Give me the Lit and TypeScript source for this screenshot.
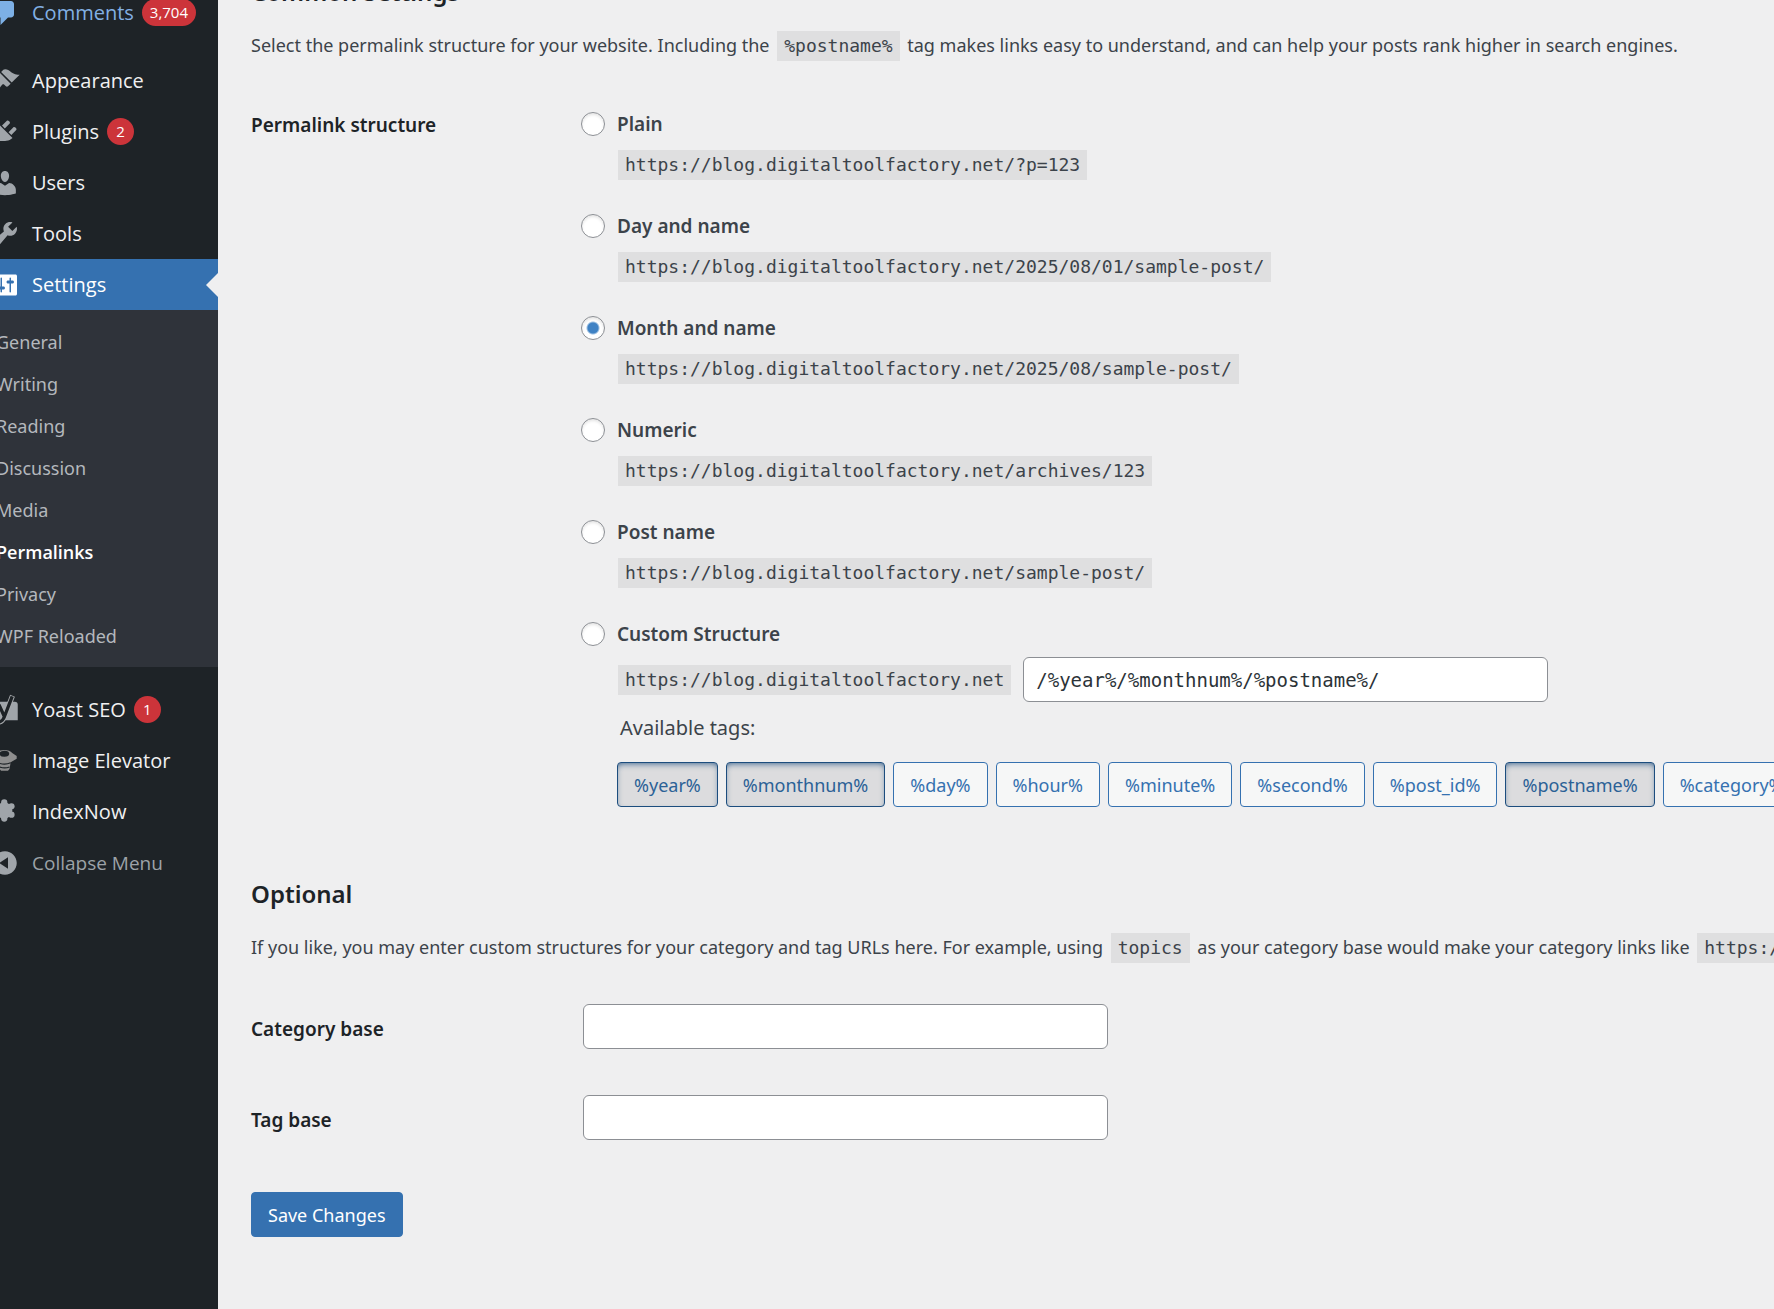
import { LitElement, html, css, svg } from "lit";
import { customElement, state } from "lit/decorators.js";
import { classMap } from "lit/directives/class-map.js";

const site = "https://blog.digitaltoolfactory.net";

const icons = {
  comments: svg`<path d="M5 2h9q.82 0 1.41.59T16 4v7q0 .82-.59 1.41T14 13h-2l-5 5v-5H5q-.82 0-1.41-.59T3 11V4q0-.82.59-1.41T5 2z"/>`,
  appearance: svg`<path d="M14.48 11.06L7.41 3.99l1.5-1.5c.5-.56 2.3-.47 3.51.32 1.21.8 1.43 1.28 2.91 2.1 1.18.64 2.45 1.26 4.45.85zm-.71.71L6.7 4.7 4.93 6.47c-.39.39-.39 1.02 0 1.41l1.06 1.06c.39.39.39 1.03 0 1.42-.6.6-1.43 1.11-2.21 1.69-.35.26-.7.53-1.01.84C1.43 14.23.4 16.08 1.4 17.07c.99 1 2.84-.03 4.18-1.36.31-.31.58-.66.85-1.02.57-.78 1.08-1.61 1.69-2.21.39-.39 1.02-.39 1.41 0l1.06 1.06c.39.39 1.02.39 1.41 0z"/>`,
  plugins: svg`<path d="M13.11 4.36L9.87 7.6 8 5.73l3.24-3.24c.35-.34 1.05-.2 1.56.32.52.51.66 1.21.31 1.55zm-8 1.77l.91-1.12 9.01 9.01-1.19.84c-.71.71-2.63 1.16-3.82 1.16H6.14L4.9 17.26c-.59.59-1.54.59-2.12 0-.59-.58-.59-1.53 0-2.12l1.24-1.24v-3.88c0-1.13.4-3.19 1.09-3.89zm7.26 3.97l3.24-3.24c.34-.35 1.04-.21 1.55.31.52.51.66 1.21.31 1.55l-3.24 3.25z"/>`,
  users: svg`<path d="M10 9.25c-2.27 0-2.73-3.44-2.73-3.44C7 4.02 7.82 2 9.97 2c2.16 0 2.98 2.02 2.71 3.81 0 0-.41 3.44-2.68 3.44zm0 2.57L12.72 10c2.39 0 4.52 2.33 4.52 4.53v2.49s-3.65 1.13-7.24 1.13c-3.65 0-7.24-1.13-7.24-1.13v-2.49c0-2.25 1.94-4.48 4.47-4.48z"/>`,
  tools: svg`<path d="M16.68 9.77c-1.34 1.34-3.3 1.67-4.95.99l-5.41 6.52c-.99.99-2.59.99-3.58 0s-.99-2.59 0-3.57l6.52-5.42c-.68-1.65-.35-3.61.99-4.95 1.28-1.28 3.12-1.62 4.72-1.06l-2.89 2.89 2.82 2.82 2.86-2.87c.53 1.58.18 3.39-1.08 4.65zM3.81 16.21c.4.39 1.04.39 1.43 0 .4-.4.4-1.04 0-1.43-.39-.4-1.03-.4-1.43 0-.39.39-.39 1.03 0 1.43z"/>`,
  settings: svg`<path d="M18 16V4c0-.55-.45-1-1-1H3c-.55 0-1 .45-1 1v12c0 .55.45 1 1 1h14c.55 0 1-.45 1-1zM8 11h1c.55 0 1 .45 1 1s-.45 1-1 1H8v1.5c0 .28-.22.5-.5.5s-.5-.22-.5-.5V13H6c-.55 0-1-.45-1-1s.45-1 1-1h1V5.5c0-.28.22-.5.5-.5s.5.22.5.5V11zm5-2h-1c-.55 0-1-.45-1-1s.45-1 1-1h1V5.5c0-.28.22-.5.5-.5s.5.22.5.5V7h1c.55 0 1 .45 1 1s-.45 1-1 1h-1v5.5c0 .28-.22.5-.5.5s-.5-.22-.5-.5V9z"/>`,
  yoast: svg`<path d="M4 4.5h12.500q2 0 2 2v10.300H2V6.500q0-2 2-2z"/><path d="M6 6.500l3.400 7.500M15 .5L9.600 14.500Q8.300 18 5 18.300" fill="none" stroke="#a7aaad" stroke-width="3.400"/><path d="M6 6.500l3.400 7.500M14.800 .9L9.600 14.500Q8.300 18 5 18.300" fill="none" stroke="#1e2327" stroke-width="2.200"/>`,
  elevator: svg`<g fill="#8e8e8e"><path d="M1.500 6.200L4 4.800Q6 2.600 9.600 2.600T14.800 4.600l3 2v1.900l-4 2.300-.8 4.500-1 1.200H7.400l-1-1.200-.8-4.500-4-2.300z"/><ellipse cx="9.600" cy="5.200" rx="3.200" ry="2" fill="#1e2327"/><path d="M5.400 11.200q4.200 1.800 8.400 0M6.500 14q3.300 1.200 6.500 0" fill="none" stroke="#1e2327" stroke-width=".7"/></g>`,
  indexnow: svg`<circle cx="9.500" cy="9" r="5.400"/><circle cx="9.500" cy="3.600" r="2.100"/><circle cx="14.300" cy="6.200" r="2.100"/><circle cx="14.300" cy="11.800" r="2.100"/><circle cx="9.500" cy="14.400" r="2.100"/><circle cx="4.700" cy="11.800" r="2.100"/><circle cx="4.700" cy="6.200" r="2.100"/>`,
  collapse: svg`<path d="M10 2.160c4.330 0 7.840 3.510 7.840 7.840s-3.510 7.840-7.840 7.840S2.160 14.330 2.160 10 5.710 2.160 10 2.160zm2 11.720V6.120L6.180 9.970z"/>`,
};

type IconName = keyof typeof icons;
type MenuItem = { label: string; icon: IconName; count?: string; state?: string };

const upperMenu: MenuItem[] = [
  { label: "Appearance", icon: "appearance" },
  { label: "Plugins", icon: "plugins", count: "2" },
  { label: "Users", icon: "users" },
  { label: "Tools", icon: "tools" },
  { label: "Settings", icon: "settings", state: "current" },
];
const submenu = ["General", "Writing", "Reading", "Discussion", "Media", "Permalinks", "Privacy", "WPF Reloaded"];
const lowerMenu: MenuItem[] = [
  { label: "Yoast SEO", icon: "yoast", count: "1" },
  { label: "Image Elevator", icon: "elevator" },
  { label: "IndexNow", icon: "indexnow" },
];

@customElement("admin-menu")
class AdminMenu extends LitElement {
  static styles = css`
    :host { display: block; flex: none; width: 218px; overflow: hidden; background: #1e2327; }
    .menu { width: 240px; margin: -13px 0 0 -22px; }
    ul { list-style: none; margin: 0; padding: 0; }
    .group { margin-bottom: 17px; }
    .item {
      display: flex; align-items: center; width: 100%; height: 51px; padding: 0; border: 0;
      position: relative; background: none; color: #f0f0f1; font: inherit; font-size: 20px;
      text-decoration: none; text-align: left;
    }
    .item svg { width: 30px; height: 30px; margin: 0 12px; fill: #a0a5aa; overflow: visible; }
    .item.hovered { color: #82b0e4; }
    .item.hovered svg { fill: #7db0e6; }
    .item.current { background: #3571b0; color: #fff; }
    .item.current svg { fill: #fff; }
    .item.current::after {
      content: ""; position: absolute; right: 0; top: 50%; margin-top: -12px;
      border: 12px solid transparent; border-left-width: 0; border-right-color: #efeff0;
    }
    .item.collapse { color: #9ca2a7; font-size: 19px; }
    .count {
      min-width: 27px; height: 27px; padding: 0 8px; margin-left: 8px; border-radius: 14px;
      box-sizing: border-box; background: #cc343a; color: #fff; font-size: 15px; line-height: 27px; text-align: center;
    }
    .submenu { background: #2f333a; padding: 11px 0 10px; margin-bottom: 17px; }
    .submenu a {
      display: block; padding: 0 18px; color: #b4b8bd; text-decoration: none;
      font-family: "Segoe UI", "Noto Sans", sans-serif; font-size: 18px; line-height: 42px;
    }
    .submenu a.active { color: #fff; font-family: "Segoe UI", "Open Sans", sans-serif; font-weight: 600; }
  `;

  private row(item: MenuItem) {
    return html`<li>
      <a class="item ${item.state ?? ""}" href="#">
        <svg viewBox="0 0 20 20" aria-hidden="true">${icons[item.icon]}</svg>
        <span>${item.label}</span>
        ${item.count ? html`<span class="count">${item.count}</span>` : ""}
      </a>
    </li>`;
  }

  render() {
    return html`<nav class="menu">
      <ul class="group">${this.row({ label: "Comments", icon: "comments", count: "3,704", state: "hovered" })}</ul>
      <ul>${upperMenu.map((i) => this.row(i))}</ul>
      <ul class="submenu">
        ${submenu.map((s) => html`<li><a href="#" class=${classMap({ active: s === "Permalinks" })}>${s}</a></li>`)}
      </ul>
      <ul>${lowerMenu.map((i) => this.row(i))}</ul>
      <button class="item collapse" type="button">
        <svg viewBox="0 0 20 20" aria-hidden="true">${icons.collapse}</svg><span>Collapse Menu</span>
      </button>
    </nav>`;
  }
}

const structures = [
  { id: "plain", label: "Plain", path: "/?p=123" },
  { id: "day", label: "Day and name", path: "/2025/08/01/sample-post/" },
  { id: "month", label: "Month and name", path: "/2025/08/sample-post/" },
  { id: "numeric", label: "Numeric", path: "/archives/123" },
  { id: "post", label: "Post name", path: "/sample-post/" },
];
const tags = ["year", "monthnum", "day", "hour", "minute", "second", "post_id", "postname", "category", "author"];

@customElement("permalink-form")
class PermalinkForm extends LitElement {
  @state() private selected = "month";
  @state() private custom = "/%year%/%monthnum%/%postname%/";

  static styles = css`
    :host { display: block; flex: 1; min-width: 0; overflow: hidden; }
    form {
      padding: 0 0 72px 33px; color: #3c434a; font-family: "Segoe UI", "Noto Sans", sans-serif; font-size: 18px;
    }
    h2 { margin: 0; font-size: 24px; line-height: 34px; font-weight: 600; color: #1d2327; }
    h2.common { margin-top: -25px; }
    p { margin: 0; line-height: 36px; white-space: nowrap; }
    h2 + p { margin-top: 18px; }
    code {
      display: inline-block; padding: 0 7px; margin: 0 3px; background: #dfdfe0;
      font-family: Consolas, "DejaVu Sans Mono", monospace; font-size: 18px; line-height: 30px;
    }
    .row { display: grid; grid-template-columns: 330px minmax(0, 1fr); }
    .heading { margin: 0; padding: 0; font-size: 19px; line-height: 28px; font-weight: 600; color: #1d2327; }
    .structure { margin-top: 48px; }
    .option { height: 102px; }
    .choice { display: flex; align-items: center; height: 26px; }
    .choice input {
      appearance: none; width: 24px; height: 24px; margin: 0; border: 1px solid #8c8f94; border-radius: 50%;
      background: #fff; box-shadow: inset 0 2px 3px rgba(0, 0, 0, 0.1);
    }
    .choice input:checked { background: radial-gradient(circle, #3f82c4 5px, #fff 7px); }
    .choice label { padding-left: 12px; font-size: 19px; line-height: 26px; font-weight: 600; }
    .detail { padding-left: 37px; margin-top: 13px; }
    .detail code { margin: 0; }
    .text {
      width: 525px; height: 45px; box-sizing: border-box; padding: 0 12px; border: 1px solid #8c8f94;
      border-radius: 6px; background: #fff; color: #2c3338; font-size: 19px;
    }
    .text.mono { font-family: Consolas, "DejaVu Sans Mono", monospace; }
    .custom { display: flex; align-items: center; gap: 12px; margin-top: 10px; padding-left: 37px; }
    .custom code { margin: 0; }
    .hint { padding-left: 39px; margin-top: 8px; font-size: 20px; }
    .tags { display: flex; gap: 8px; margin: 16px 0 0; padding: 0 0 0 36px; list-style: none; }
    .tags button, .save {
      height: 45px; padding: 0 16px; border: 1px solid #3571b0; border-radius: 4px;
      background: #f6f7f7; color: #3571b0; font: inherit; white-space: nowrap;
    }
    .tags button.used {
      background: #dcdcde; border-color: #1c4d7e; color: #2b6196; box-shadow: inset 0 3px 7px -3px #1c4d7e;
    }
    .optional { margin-top: 70px; }
    .base { margin-top: 46px; }
    .base.first { margin-top: 39px; }
    .base .text { margin-left: 2px; }
    .base .heading { padding-top: 11px; }
    .save { margin-top: 52px; background: #3571b0; color: #fff; }
  `;

  render() {
    return html`<form @submit=${(e: Event) => e.preventDefault()}>
      <h2 class="common">Common Settings</h2>
      <p>
        Select the permalink structure for your website. Including the <code>%postname%</code> tag makes links easy to
        understand, and can help your posts rank higher in search engines.
      </p>
      <div class="row structure" role="radiogroup" aria-labelledby="structure">
        <h3 class="heading" id="structure">Permalink structure</h3>
        <div>
          ${structures.map(
            (s) => html`<div class="option">
              ${this.radio(s.id, s.label)}
              <div class="detail"><code>${site}${s.path}</code></div>
            </div>`
          )}
          ${this.radio("custom", "Custom Structure")}
          <div class="custom">
            <code>${site}</code>
            <input
              class="text mono" type="text" aria-label="Custom structure" .value=${this.custom}
              @input=${(e: Event) => (this.custom = (e.target as HTMLInputElement).value)}
            />
          </div>
          <p class="hint">Available tags:</p>
          <ul class="tags">
            ${tags.map((t) => {
              const tag = `%${t}%`;
              const used = this.custom.includes(tag);
              return html`<li>
                <button type="button" aria-pressed=${used} class=${classMap({ used })} @click=${() => this.toggle(tag)}>${tag}</button>
              </li>`;
            })}
          </ul>
        </div>
      </div>
      <h2 class="optional">Optional</h2>
      <p>
        If you like, you may enter custom structures for your category and tag URLs here. For example, using
        <code>topics</code> as your category base would make your category links like
        <code>${site}/topics/uncategorized/</code>.
      </p>
      <div class="row base first">
        <label class="heading" for="category">Category base</label>
        <div><input class="text" id="category" type="text" /></div>
      </div>
      <div class="row base">
        <label class="heading" for="tag">Tag base</label>
        <div><input class="text" id="tag" type="text" /></div>
      </div>
      <button class="save" type="submit">Save Changes</button>
    </form>`;
  }

  private radio(id: string, label: string) {
    return html`<div class="choice">
      <input type="radio" name="selection" id=${id} .checked=${this.selected === id} @change=${() => (this.selected = id)} />
      <label for=${id}>${label}</label>
    </div>`;
  }

  private toggle(tag: string) {
    this.custom = this.custom.includes(tag) ? this.custom.replace(`${tag}/`, "") : `${this.custom}${tag}/`;
    this.selected = "custom";
  }
}

@customElement("app-root")
class AppRoot extends LitElement {
  static styles = css`
    :host {
      display: flex; min-height: 100vh; overflow: hidden; background: #efeff0;
      font-family: "Segoe UI", "Open Sans", "Noto Sans", sans-serif; font-size: 18px;
    }
  `;
  render() {
    return html`<admin-menu></admin-menu><permalink-form></permalink-form>`;
  }
}
